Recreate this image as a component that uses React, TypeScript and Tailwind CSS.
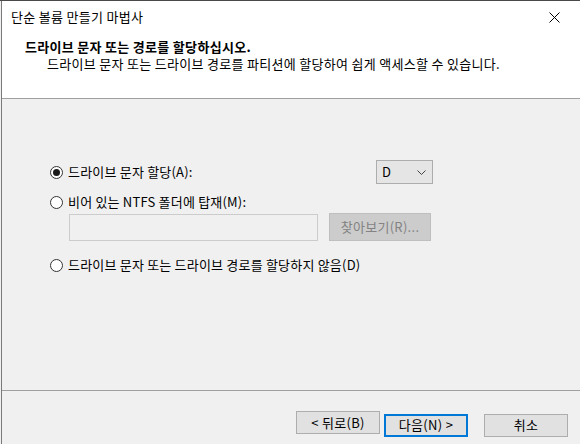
const font = { fontFamily: '"Noto Sans CJK KR", "Noto Sans", sans-serif' };

const Radio = ({ checked, label }: { checked?: boolean; label: string }) => (
  <div className="flex items-center h-[16px]">
    <span className="flex items-center justify-center w-[13px] h-[13px] rounded-full border border-[#333333] bg-white">
      {checked && <span className="w-[7px] h-[7px] rounded-full bg-[#1a1a1a]" />}
    </span>
    <span className="ml-[5px] text-[13px] leading-[16px] tracking-[0.2px] text-black">{label}</span>
  </div>
);

const FooterButton = ({ label, primary }: { label: string; primary?: boolean }) => (
  <button
    className={
      primary
        ? "w-[84px] h-[23px] bg-[#e1e1e1] border-2 border-[#0078d7] text-[13px] leading-[16px] tracking-[0.3px] text-black"
        : "w-[84px] h-[23px] bg-[#e1e1e1] border border-[#adadad] text-[13px] leading-[16px] tracking-[0.3px] text-black"
    }
  >
    {label}
  </button>
);

export default function App() {
  return (
    <div
      className="w-[580px] h-[444px] bg-[#f0f0f0] border-t border-[#4a4a4a] flex flex-col overflow-hidden"
      style={font}
    >
      <div className="flex-1 flex flex-col ml-px border-l border-[#7a7a7a]">
        {/* title bar */}
        <div className="h-[30px] bg-white flex items-center pl-[9px] pr-[20px] pt-[2px]">
          <span className="text-[13px] leading-[16px] tracking-[0.3px] text-black">단순 볼륨 만들기 마법사</span>
          <svg className="ml-auto" width="11" height="11" viewBox="0 0 11 11">
            <path d="M0.5 0.5 L10.5 10.5 M10.5 0.5 L0.5 10.5" stroke="#000" strokeWidth="1" fill="none" />
          </svg>
        </div>

        {/* header */}
        <div className="h-[68px] bg-white pt-[7px] pl-[23px] border-b border-[#a0a0a0]">
          <div className="text-[13px] leading-[17px] tracking-[0.3px] font-bold text-black">
            드라이브 문자 또는 경로를 할당하십시오.
          </div>
          <div className="pl-[22px] text-[13px] leading-[17px] tracking-[0.3px] text-black">
            드라이브 문자 또는 드라이브 경로를 파티션에 할당하여 쉽게 액세스할 수 있습니다.
          </div>
        </div>

        {/* body */}
        <div className="h-[292px] pt-[61px] pl-[48px] border-b border-[#a0a0a0]">
          <div className="w-[383px] flex items-center h-[24px]">
            <Radio checked label="드라이브 문자 할당(A):" />
            <div className="ml-auto w-[57px] h-[24px] bg-[#e5e5e5] border border-[#adadad] flex items-center pl-[5px] pr-[6px]">
              <span className="text-[13px] leading-[16px] text-black">D</span>
              <svg className="ml-auto" width="9" height="5" viewBox="0 0 9 5">
                <path d="M0.5 0.5 L4.5 4.5 L8.5 0.5" stroke="#444" strokeWidth="1" fill="none" />
              </svg>
            </div>
          </div>

          <div className="mt-[10px]">
            <Radio label="비어 있는 NTFS 폴더에 탑재(M):" />
          </div>

          <div className="mt-[3px] flex items-start pl-[19px]">
            <div className="mt-[1px] w-[249px] h-[27px] bg-[#f0f0f0] border border-[#cccccc]" />
            <div className="ml-[11px] w-[102px] h-[28px] bg-[#cccccc] border border-[#bfbfbf] flex items-center justify-center text-[13px] leading-[16px] tracking-[0.3px] text-[#838383]">
              찾아보기(R)...
            </div>
          </div>

          <div className="mt-[16px]">
            <Radio label="드라이브 문자 또는 드라이브 경로를 할당하지 않음(D)" />
          </div>
        </div>

        {/* footer */}
        <div className="flex-1 flex items-start pt-[20px] pl-[294px]">
          <FooterButton label="< 뒤로(B)" />
          <div className="ml-[4px]">
            <FooterButton primary label="다음(N) >" />
          </div>
          <div className="ml-[16px]">
            <FooterButton label="취소" />
          </div>
        </div>
      </div>
    </div>
  );
}
